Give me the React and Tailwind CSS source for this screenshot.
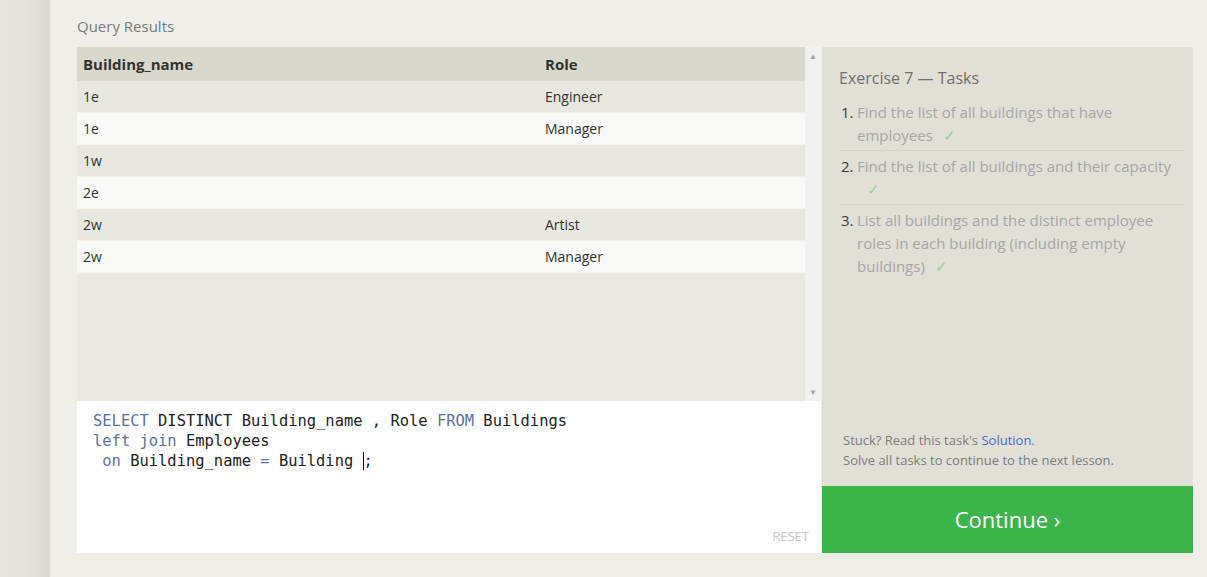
const rows = [
  { building: '1e', role: 'Engineer' },
  { building: '1e', role: 'Manager' },
  { building: '1w', role: '' },
  { building: '2e', role: '' },
  { building: '2w', role: 'Artist' },
  { building: '2w', role: 'Manager' },
];

const tasks = [
  ['Find the list of all buildings that have', 'employees'],
  ['Find the list of all buildings and their capacity', ''],
  ['List all buildings and the distinct employee', 'roles in each building (including empty', 'buildings)'],
];

function Check() {
  return <span className="ml-[10px] text-[#94d293]">✓</span>;
}

export default function App() {
  const kw = 'text-[#5f6f9e]';
  return (
    <div className="flex h-[577px] w-[1207px] overflow-hidden bg-[#f0eee8] font-['Open_Sans',sans-serif]">
      <div className="h-full w-[50px] shrink-0 bg-gradient-to-r from-[#e9e6e2] via-[#e6e3de] to-[#dcd8d2]" />
      <div className="flex min-w-0 flex-1 flex-col pl-[27px] pr-[14px]">
        <div className="pt-[17px] pb-[11px] text-[15px] leading-[19px] text-[#7b7b7b]">Query Results</div>
        <div className="flex">
          <div className="flex w-[744px] shrink-0 flex-col">
            <div className="flex h-[354px]">
              <div className="flex-1 bg-[#e9e8e1]">
                <div className="flex h-[34px] items-center bg-[#d9d8cd] text-[15px] font-bold text-[#333]">
                  <div className="w-[468px] pl-[6px]">Building_name</div>
                  <div>Role</div>
                </div>
                {rows.map((r, i) => (
                  <div
                    key={i}
                    className={`flex h-[32px] items-center border-b border-[#f3f2ee] text-[14px] text-[#333] ${i % 2 ? 'bg-[#f9f9f8]' : 'bg-[#e8e7e0]'}`}
                  >
                    <div className="w-[468px] pl-[6px]">{r.building}</div>
                    <div>{r.role}</div>
                  </div>
                ))}
              </div>
              <div className="flex w-[16px] flex-col items-center justify-between bg-[#f1f1f1] py-[5px] text-[8px] leading-none text-[#a3a3a3]">
                <span>▲</span>
                <span>▼</span>
              </div>
            </div>
            <div className="relative h-[152px] bg-white pl-[16px] pt-[10px] font-['DejaVu_Sans_Mono',monospace] text-[15.45px] leading-[20px] text-[#222]">
              <div className="whitespace-pre">
                <span className={kw}>SELECT</span> DISTINCT Building_name , Role <span className={kw}>FROM</span> Buildings
              </div>
              <div className="whitespace-pre">
                <span className={kw}>left join</span> Employees
              </div>
              <div className="whitespace-pre">
                {' '}<span className={kw}>on</span> Building_name <span className={kw}>=</span> Building <span className="border-l border-black">;</span>
              </div>
              <div className="absolute bottom-[9px] right-[12px] font-['Open_Sans',sans-serif] text-[13px] leading-[16px] text-[#c8c8c8]">RESET</div>
            </div>
          </div>
          <div className="ml-px flex w-[371px] shrink-0 flex-col">
            <div className="flex h-[439px] flex-col justify-between bg-[#e2e0d6] pl-[17px] pr-[8px]">
              <div>
                <div className="pt-[20px] text-[16px] leading-[22px] text-[#6f6f6f]">Exercise 7 — Tasks</div>
                <ol className="mt-[8px]">
                  {tasks.map((t, i) => (
                    <li key={i} className={`flex pt-[4px] pb-[3px] text-[15px] leading-[23px] ${i < 2 ? 'border-b border-[#d3d1c6]' : ''}`}>
                      <span className="w-[18px] shrink-0 pl-[2px] text-[#3c3c3c]">{i + 1}.</span>
                      <div className="text-[#a6a6a6]">
                        {t.map((line, j) => (
                          <div key={j}>
                            {line}
                            {j === t.length - 1 && <Check />}
                          </div>
                        ))}
                      </div>
                    </li>
                  ))}
                </ol>
              </div>
              <div className="pb-[16px] pl-[4px] text-[13px] leading-[20px] text-[#7c7c7c]">
                <div>
                  Stuck? Read this task's <span className="text-[#3d6fc7]">Solution</span>.
                </div>
                <div>Solve all tasks to continue to the next lesson.</div>
              </div>
            </div>
            <div className="flex h-[67px] items-center justify-center bg-[#3bb44a] text-[22px] text-white">Continue ›</div>
          </div>
        </div>
      </div>
    </div>
  );
}
